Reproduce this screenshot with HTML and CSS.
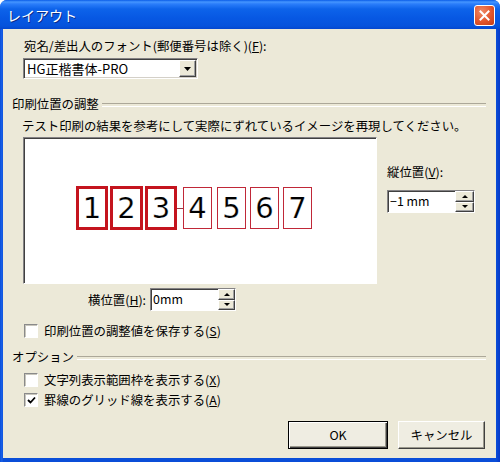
FILE: index.html
```html
<!DOCTYPE html>
<html lang="ja">

<head>
    <meta charset="UTF-8">
    <title>レイアウト</title>
    <link rel="stylesheet" href="styles.css">
</head>

<body>
    <div class="window">
        <div class="titlebar">
            <span class="title">レイアウト</span>
            <span class="close">
                <svg width="11" height="11" viewBox="0 0 11 11">
                    <path d="M1.5 1.5 L9.5 9.5 M9.5 1.5 L1.5 9.5" stroke="#fff" stroke-width="2" stroke-linecap="square" />
                </svg>
            </span>
        </div>
        <div class="client">
            <div class="label lead">宛名/差出人のフォント(郵便番号は除く)(<u>F</u>):</div>
            <div class="combo">
                <span class="combo-text">HG正楷書体-PRO</span>
                <span class="combo-btn">
                    <svg width="7" height="4" viewBox="0 0 7 4"><path d="M0 0 H7 L3.5 4 Z" fill="#000" /></svg>
                </span>
            </div>

            <div class="group group-pos"><span>印刷位置の調整</span></div>
            <div class="desc">テスト印刷の結果を参考にして実際にずれているイメージを再現してください。</div>

            <div class="preview-row">
                <div class="preview">
                    <div class="cells">
                        <div class="cell thick w1">1</div>
                        <div class="cell thick w2">2</div>
                        <div class="cell thick w1">3</div>
                        <div class="link"></div>
                        <div class="cell">4</div>
                        <div class="cell gap5">5</div>
                        <div class="cell gap4">6</div>
                        <div class="cell gap4">7</div>
                    </div>
                </div>
                <div class="vpos">
                    <div class="label">縦位置(<u>V</u>):</div>
                    <div class="spinner vspin">
                        <div class="spin-field">−1 mm</div>
                        <div class="spin-btns">
                            <span class="spin-up"></span>
                            <span class="spin-down"></span>
                        </div>
                    </div>
                </div>
            </div>

            <div class="hpos">
                <span class="label">横位置(<u>H</u>):</span>
                <div class="spinner hspin">
                    <div class="spin-field">0mm</div>
                    <div class="spin-btns">
                        <span class="spin-up"></span>
                        <span class="spin-down"></span>
                    </div>
                </div>
            </div>

            <div class="check save">
                <span class="box"></span>
                <span>印刷位置の調整値を保存する(<u>S</u>)</span>
            </div>

            <div class="group group-opt"><span>オプション</span></div>
            <div class="check opt1">
                <span class="box"></span>
                <span>文字列表示範囲枠を表示する(<u>X</u>)</span>
            </div>
            <div class="check opt2">
                <span class="box">
                    <svg width="9" height="9" viewBox="0 0 9 9"><path d="M1 4 L3.5 6.5 L8 1.5" stroke="#000" stroke-width="1.8" fill="none" /></svg>
                </span>
                <span>罫線のグリッド線を表示する(<u>A</u>)</span>
            </div>

            <div class="buttons">
                <div class="btn default">OK</div>
                <div class="btn cancel">キャンセル</div>
            </div>
        </div>
    </div>
</body>

</html>
```

FILE: styles.css
```css
* {
    margin: 0;
    padding: 0;
    box-sizing: border-box;
}

body {
    font-family: "Noto Sans CJK JP", sans-serif;
    font-size: 12.4px;
    color: #000;
    background: #fff;
}

.window {
    display: flex;
    flex-direction: column;
    width: 500px;
    height: 462px;
    background: linear-gradient(90deg, #0a4ed8 0, #1a62ea 2px, #0a4ed8 3px, #0a4ed8 496px, #0638c8 500px);
    border-radius: 7px 7px 0 0;
    overflow: hidden;
}

.titlebar {
    display: flex;
    align-items: center;
    justify-content: space-between;
    height: 29px;
    padding: 0 5px 0 7px;
    background: linear-gradient(#0a5ce8 0, #4596ff 2px, #2a7dfa 4px, #0d63ea 9px, #0758e3 18px, #0653dc 26px, #0447cf 29px);
}

.title {
    color: #fff;
    font-size: 14px;
    line-height: 16px;
    text-shadow: 1px 1px 0 #0a2d8a;
    margin-top: 1px;
}

.close {
    display: flex;
    align-items: center;
    justify-content: center;
    width: 21px;
    height: 21px;
    margin-top: 1px;
    border: 1px solid #fff;
    border-radius: 3px;
    background: radial-gradient(circle at 35% 30%, #f08a66 0, #e2552c 55%, #c23c14 100%);
}

.client {
    flex: 1;
    display: flex;
    flex-direction: column;
    align-items: flex-start;
    margin: 0 4px 4px 3px;
    padding: 10px 10px 0 9px;
    background: #ece9d8;
    line-height: 14px;
}

u {
    text-decoration: underline;
    text-underline-offset: 1px;
}

.lead {
    margin-left: 12px;
}

/* combo box */
.combo {
    display: flex;
    align-items: center;
    width: 175px;
    height: 21px;
    margin: 5px 0 0 11px;
    padding: 1px;
    background: #fff;
    border-top: 1px solid #848284;
    border-left: 1px solid #848284;
    border-right: 1px solid #fff;
    border-bottom: 1px solid #fff;
    box-shadow: inset 1px 1px 0 #404040, inset -1px -1px 0 #d4d0c8;
}

.combo-text {
    flex: 1;
    padding-left: 2px;
    font-size: 13px;
}

.combo-btn {
    display: flex;
    align-items: center;
    justify-content: center;
    width: 17px;
    height: 17px;
    background: #ece9d8;
    border-top: 1px solid #fff;
    border-left: 1px solid #fff;
    border-right: 1px solid #404040;
    border-bottom: 1px solid #404040;
    box-shadow: inset -1px -1px 0 #a0a0a0;
}

/* group headings */
.group {
    display: flex;
    align-items: center;
    align-self: stretch;
    gap: 3px;
}

.group::after {
    content: "";
    flex: 1;
    height: 2px;
    border-top: 1px solid #aca899;
    border-bottom: 1px solid #fff;
    margin-top: 1px;
}

.group-pos {
    margin-top: 18px;
}

.desc {
    margin: 8px 0 0 10px;
}

/* preview */
.preview-row {
    display: flex;
    gap: 10px;
    margin: 4px 0 0 11px;
}

.preview {
    width: 354px;
    height: 147px;
    background: #fff;
    border-top: 1px solid #848284;
    border-left: 1px solid #848284;
    border-right: 1px solid #fff;
    border-bottom: 1px solid #fff;
    box-shadow: inset 1px 1px 0 #404040;
    padding: 48px 0 0 52px;
}

.cells {
    display: flex;
    align-items: center;
}

.cell {
    display: flex;
    align-items: center;
    justify-content: center;
    width: 29px;
    height: 42px;
    border: 1px solid #c02838;
    font-family: "DejaVu Sans", sans-serif;
    font-size: 29px;
    line-height: 1;
    padding-top: 1px;
    -webkit-text-stroke: 0.2px #fff;
}

.cell.thick {
    height: 44px;
    border: 3px solid #c4141e;
}

.w1 {
    width: 32px;
}

.w2 {
    width: 33px;
    margin: 0 2px;
}

.link {
    width: 6px;
    height: 1px;
    background: #9a3a46;
}

.gap5 {
    margin-left: 5px;
}

.gap4 {
    margin-left: 4px;
}

.vpos {
    padding-top: 28px;
}

/* spinners */
.spinner {
    display: flex;
    height: 23px;
}

.vspin {
    margin-top: 11px;
}

.spin-field {
    width: 68px;
    padding: 3px 0 0 2px;
    background: #fff;
    border-top: 1px solid #848284;
    border-left: 1px solid #848284;
    border-bottom: 1px solid #fff;
    box-shadow: inset 1px 1px 0 #404040;
}

.spin-btns {
    display: flex;
    flex-direction: column;
    width: 20px;
    border-right: 1px solid #fff;
    border-bottom: 1px solid #fff;
    border-top: 1px solid #848284;
}

.hspin .spin-btns {
    width: 18px;
}

.spin-up,
.spin-down {
    flex: 1;
    display: flex;
    align-items: center;
    justify-content: center;
    background: #ece9d8;
    border-top: 1px solid #fff;
    border-left: 1px solid #fff;
    border-right: 1px solid #404040;
    border-bottom: 1px solid #404040;
    box-shadow: inset -1px -1px 0 #a0a0a0;
}

.spin-up::before,
.spin-down::before {
    content: "";
    border-left: 3px solid transparent;
    border-right: 3px solid transparent;
}

.spin-up::before {
    border-bottom: 3px solid #000;
}

.spin-down::before {
    border-top: 3px solid #000;
}

.hpos {
    display: flex;
    align-items: center;
    gap: 4px;
    margin: 4px 0 0 76px;
}

/* checkboxes */
.check {
    display: flex;
    align-items: center;
    gap: 6px;
    margin-left: 12px;
}

.box {
    display: flex;
    align-items: center;
    justify-content: center;
    width: 14px;
    height: 14px;
    background: #fff;
    border-top: 1px solid #8a8a8a;
    border-left: 1px solid #8a8a8a;
    border-right: 1px solid #fff;
    border-bottom: 1px solid #fff;
    box-shadow: inset 1px 1px 0 #c8c6bc;
}

.save {
    margin-top: 13px;
}

.group-opt {
    margin-top: 12px;
}

.opt1 {
    margin-top: 9px;
}

.opt2 {
    margin-top: 6px;
}

/* buttons */
.buttons {
    display: flex;
    align-self: flex-end;
    gap: 10px;
    margin: 14px 1px 0 0;
}

.btn {
    display: flex;
    align-items: center;
    justify-content: center;
    height: 28px;
    background: #efede2;
    border-top: 1px solid #fff;
    border-left: 1px solid #fff;
    border-right: 1px solid #404040;
    border-bottom: 1px solid #404040;
    box-shadow: inset -1px -1px 0 #9a988c;
}

.btn.default {
    width: 100px;
    border: 1px solid #000;
    box-shadow: inset 1px 1px 0 #fff, inset -1px -1px 0 #404040, inset -2px -2px 0 #9a988c;
}

.btn.cancel {
    width: 87px;
}
```
